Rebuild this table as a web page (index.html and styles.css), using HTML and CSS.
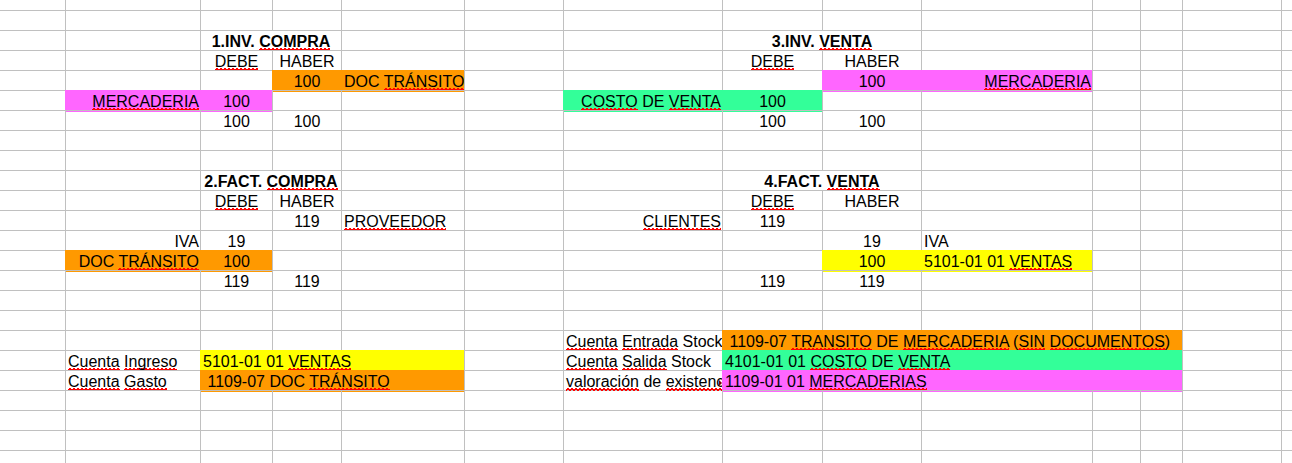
FILE: index.html
```html
<!DOCTYPE html>
<html lang="es">
<head>
    <meta charset="UTF-8">
    <meta name="viewport" content="width=device-width, initial-scale=1.0">
    <title>Asientos inventario</title>
    <link rel="stylesheet" href="styles.css">
</head>
<body>

<div class="sheet">

    <!-- fila parcial superior -->
    <div class="row top">
        <div class="c"></div><div class="c"></div><div class="c"></div><div class="c"></div><div class="c"></div><div class="c"></div><div class="c"></div>
        <div class="c"></div><div class="c"></div><div class="c"></div><div class="c"></div><div class="c"></div><div class="c"></div><div class="c"></div>
    </div>
    <div class="row">
        <div class="c"></div><div class="c"></div><div class="c"></div><div class="c"></div><div class="c"></div><div class="c"></div><div class="c"></div>
        <div class="c"></div><div class="c"></div><div class="c"></div><div class="c"></div><div class="c"></div><div class="c"></div><div class="c"></div>
    </div>

    <!-- 1.INV. COMPRA / 3.INV. VENTA -->
    <div class="row">
        <div class="c"></div><div class="c"></div>
        <div class="c m b span2">1.INV. <span class="sp">COMPRA</span></div>
        <div class="c"></div><div class="c"></div><div class="c"></div>
        <div class="c m b span2">3.INV. <span class="sp">VENTA</span></div>
        <div class="c"></div><div class="c"></div><div class="c"></div><div class="c"></div><div class="c"></div>
    </div>
    <div class="row">
        <div class="c"></div><div class="c"></div>
        <div class="c m"><span class="sp">DEBE</span></div>
        <div class="c m">HABER</div>
        <div class="c"></div><div class="c"></div><div class="c"></div>
        <div class="c m"><span class="sp">DEBE</span></div>
        <div class="c m">HABER</div>
        <div class="c"></div><div class="c"></div><div class="c"></div><div class="c"></div><div class="c"></div>
    </div>
    <div class="row">
        <div class="c"></div><div class="c"></div><div class="c"></div>
        <div class="c m orange">100</div>
        <div class="c orange">DOC <span class="sp">TRÁNSITO</span></div>
        <div class="c"></div><div class="c"></div><div class="c"></div>
        <div class="c m pink">100</div>
        <div class="c r pink"><span class="sp">MERCADERIA</span></div>
        <div class="c"></div><div class="c"></div><div class="c"></div><div class="c"></div>
    </div>
    <div class="row">
        <div class="c"></div>
        <div class="c r pink"><span class="sp">MERCADERIA</span></div>
        <div class="c m pink">100</div>
        <div class="c"></div><div class="c"></div><div class="c"></div>
        <div class="c r green"><span class="sp">COSTO</span> DE <span class="sp">VENTA</span></div>
        <div class="c m green">100</div>
        <div class="c"></div><div class="c"></div><div class="c"></div><div class="c"></div><div class="c"></div><div class="c"></div>
    </div>
    <div class="row">
        <div class="c"></div><div class="c"></div>
        <div class="c m">100</div>
        <div class="c m">100</div>
        <div class="c"></div><div class="c"></div><div class="c"></div>
        <div class="c m">100</div>
        <div class="c m">100</div>
        <div class="c"></div><div class="c"></div><div class="c"></div><div class="c"></div><div class="c"></div>
    </div>
    <div class="row">
        <div class="c"></div><div class="c"></div><div class="c"></div><div class="c"></div><div class="c"></div><div class="c"></div><div class="c"></div>
        <div class="c"></div><div class="c"></div><div class="c"></div><div class="c"></div><div class="c"></div><div class="c"></div><div class="c"></div>
    </div>
    <div class="row">
        <div class="c"></div><div class="c"></div><div class="c"></div><div class="c"></div><div class="c"></div><div class="c"></div><div class="c"></div>
        <div class="c"></div><div class="c"></div><div class="c"></div><div class="c"></div><div class="c"></div><div class="c"></div><div class="c"></div>
    </div>

    <!-- 2.FACT. COMPRA / 4.FACT. VENTA -->
    <div class="row">
        <div class="c"></div><div class="c"></div>
        <div class="c m b span2">2.FACT. <span class="sp">COMPRA</span></div>
        <div class="c"></div><div class="c"></div><div class="c"></div>
        <div class="c m b span2">4.FACT. <span class="sp">VENTA</span></div>
        <div class="c"></div><div class="c"></div><div class="c"></div><div class="c"></div><div class="c"></div>
    </div>
    <div class="row">
        <div class="c"></div><div class="c"></div>
        <div class="c m"><span class="sp">DEBE</span></div>
        <div class="c m">HABER</div>
        <div class="c"></div><div class="c"></div><div class="c"></div>
        <div class="c m"><span class="sp">DEBE</span></div>
        <div class="c m">HABER</div>
        <div class="c"></div><div class="c"></div><div class="c"></div><div class="c"></div><div class="c"></div>
    </div>
    <div class="row">
        <div class="c"></div><div class="c"></div><div class="c"></div>
        <div class="c m">119</div>
        <div class="c"><span class="sp">PROVEEDOR</span></div>
        <div class="c"></div>
        <div class="c r"><span class="sp">CLIENTES</span></div>
        <div class="c m">119</div>
        <div class="c"></div><div class="c"></div><div class="c"></div><div class="c"></div><div class="c"></div><div class="c"></div>
    </div>
    <div class="row">
        <div class="c"></div>
        <div class="c r">IVA</div>
        <div class="c m">19</div>
        <div class="c"></div><div class="c"></div><div class="c"></div><div class="c"></div><div class="c"></div>
        <div class="c m">19</div>
        <div class="c">IVA</div>
        <div class="c"></div><div class="c"></div><div class="c"></div><div class="c"></div>
    </div>
    <div class="row">
        <div class="c"></div>
        <div class="c r orange">DOC <span class="sp">TRÁNSITO</span></div>
        <div class="c m orange">100</div>
        <div class="c"></div><div class="c"></div><div class="c"></div><div class="c"></div><div class="c"></div>
        <div class="c m yellow">100</div>
        <div class="c yellow">5101-01 01 <span class="sp">VENTAS</span></div>
        <div class="c"></div><div class="c"></div><div class="c"></div><div class="c"></div>
    </div>
    <div class="row">
        <div class="c"></div><div class="c"></div>
        <div class="c m">119</div>
        <div class="c m">119</div>
        <div class="c"></div><div class="c"></div><div class="c"></div>
        <div class="c m">119</div>
        <div class="c m">119</div>
        <div class="c"></div><div class="c"></div><div class="c"></div><div class="c"></div><div class="c"></div>
    </div>
    <div class="row">
        <div class="c"></div><div class="c"></div><div class="c"></div><div class="c"></div><div class="c"></div><div class="c"></div><div class="c"></div>
        <div class="c"></div><div class="c"></div><div class="c"></div><div class="c"></div><div class="c"></div><div class="c"></div><div class="c"></div>
    </div>
    <div class="row">
        <div class="c"></div><div class="c"></div><div class="c"></div><div class="c"></div><div class="c"></div><div class="c"></div><div class="c"></div>
        <div class="c"></div><div class="c"></div><div class="c"></div><div class="c"></div><div class="c"></div><div class="c"></div><div class="c"></div>
    </div>

    <!-- cuentas -->
    <div class="row">
        <div class="c"></div><div class="c"></div><div class="c"></div><div class="c"></div><div class="c"></div><div class="c"></div>
        <div class="c"><span class="sp">Cuenta</span> <span class="sp">Entrada</span> Stock</div>
        <div class="c orange span5">&nbsp;1109-07 <span class="sp">TRANSITO</span> DE <span class="sp">MERCADERIA</span> (<span class="sp">SIN</span> <span class="sp">DOCUMENTOS</span>)</div>
        <div class="c"></div><div class="c"></div>
    </div>
    <div class="row">
        <div class="c"></div>
        <div class="c"><span class="sp">Cuenta</span> <span class="sp">Ingreso</span></div>
        <div class="c yellow span3">5101-01 01 <span class="sp">VENTAS</span></div>
        <div class="c"></div>
        <div class="c"><span class="sp">Cuenta</span> <span class="sp">Salida</span> Stock</div>
        <div class="c green span5">4101-01 01 <span class="sp">COSTO</span> DE <span class="sp">VENTA</span></div>
        <div class="c"></div><div class="c"></div>
    </div>
    <div class="row">
        <div class="c"></div>
        <div class="c"><span class="sp">Cuenta</span> <span class="sp">Gasto</span></div>
        <div class="c orange span3">&nbsp;1109-07 DOC <span class="sp">TRÁNSITO</span></div>
        <div class="c"></div>
        <div class="c clip"><span class="sp">valoración</span> de <span class="sp">existencias</span></div>
        <div class="c pink span5">1109-01 01 <span class="sp">MERCADERIAS</span></div>
        <div class="c"></div><div class="c"></div>
    </div>

    <div class="row">
        <div class="c"></div><div class="c"></div><div class="c"></div><div class="c"></div><div class="c"></div><div class="c"></div><div class="c"></div>
        <div class="c"></div><div class="c"></div><div class="c"></div><div class="c"></div><div class="c"></div><div class="c"></div><div class="c"></div>
    </div>
    <div class="row">
        <div class="c"></div><div class="c"></div><div class="c"></div><div class="c"></div><div class="c"></div><div class="c"></div><div class="c"></div>
        <div class="c"></div><div class="c"></div><div class="c"></div><div class="c"></div><div class="c"></div><div class="c"></div><div class="c"></div>
    </div>
    <div class="row">
        <div class="c"></div><div class="c"></div><div class="c"></div><div class="c"></div><div class="c"></div><div class="c"></div><div class="c"></div>
        <div class="c"></div><div class="c"></div><div class="c"></div><div class="c"></div><div class="c"></div><div class="c"></div><div class="c"></div>
    </div>
    <div class="row">
        <div class="c"></div><div class="c"></div><div class="c"></div><div class="c"></div><div class="c"></div><div class="c"></div><div class="c"></div>
        <div class="c"></div><div class="c"></div><div class="c"></div><div class="c"></div><div class="c"></div><div class="c"></div><div class="c"></div>
    </div>

</div>

</body>
</html>
```

FILE: styles.css
```css
* {
    margin: 0;
    padding: 0;
    box-sizing: border-box;
}

body {
    font-family: 'Liberation Sans', Arial, sans-serif;
    font-size: 16px;
    color: #000;
    background-color: #fff;
    overflow: hidden;
    height: 463px;
}

/* Hoja de calculo */
.sheet {
    width: 1321px;
}

.row {
    display: grid;
    grid-template-columns: 65px 135px 72px 69px 123px 99px 159px 100px 99px 171px 48px 42px 99px 40px;
    height: 20px;
}

.row.top {
    height: 10px;
}

.c {
    border-left: 1px solid #c0c0c0;
    border-top: 1px solid #c0c0c0;
    line-height: 20px;
    padding: 1px 2px 0 2px;
    white-space: nowrap;
}

.c:first-child {
    border-left: none;
}

.row.top .c {
    border-top: none;
}

/* alineacion */
.m {
    text-align: center;
}

.r {
    text-align: right;
    padding-right: 1px;
}

.b {
    font-weight: bold;
}

.span2 {
    grid-column: span 2;
}

.span3 {
    grid-column: span 3;
}

.span5 {
    grid-column: span 5;
}

/* colores de fondo */
.orange {
    background-color: #ff9900;
    border-color: #ff9900;
}

.pink {
    background-color: #ff66ff;
    border-color: #ff66ff;
}

.green {
    background-color: #33ff99;
    border-color: #33ff99;
}

.yellow {
    background-color: #ffff00;
    border-color: #ffff00;
}

/* subrayado del corrector (onda roja) */
.sp {
    padding-bottom: 1px;
    background-image: url("data:image/svg+xml,%3Csvg xmlns='http://www.w3.org/2000/svg' width='4' height='3'%3E%3Cpath d='M0 2.5L2 0.5L4 2.5' fill='none' stroke='%23ff0000' stroke-width='1.3' shape-rendering='crispEdges'/%3E%3C/svg%3E");
    background-size: 4px 3px;
    background-repeat: repeat-x;
    background-position: 0 100%;
}

/* texto cortado con flecha */
.clip {
    position: relative;
    overflow: hidden;
    padding-right: 4px;
}

.clip::after {
    content: '';
    position: absolute;
    right: 0;
    top: 9px;
    border-left: 3px solid #7a0000;
    border-top: 3px solid transparent;
    border-bottom: 3px solid transparent;
}
```
